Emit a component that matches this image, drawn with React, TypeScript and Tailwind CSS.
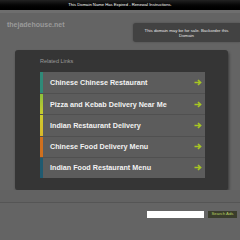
import React from "react";

const links = [
  { t: "Chinese Chinese Restaurant", c: "bg-[#2f8a78]" },
  { t: "Pizza and Kebab Delivery Near Me", c: "bg-gradient-to-b from-[#8cc03a] to-[#c8cc2e]" },
  { t: "Indian Restaurant Delivery", c: "bg-gradient-to-b from-[#cccc2e] to-[#d8b82a]" },
  { t: "Chinese Food Delivery Menu", c: "bg-[#d0701e]" },
  { t: "Indian Food Restaurant Menu", c: "bg-[#1f5a70]" },
];

function Arrow() {
  return (
    <svg width="8" height="7" viewBox="0 0 8 7" className="shrink-0">
      <path d="M0.5 3.5H6M4 1L6.6 3.5L4 6" stroke="#a6c623" strokeWidth="1.6" fill="none" />
    </svg>
  );
}

export default function App() {
  return (
    <div className="w-[240px] h-[240px] overflow-hidden bg-[#646464] flex flex-col" style={{ fontFamily: '"Liberation Sans", Arial, sans-serif' }}>
      <div className="h-[10px] shrink-0 bg-gradient-to-b from-[#222] to-[#000] flex items-center justify-center text-[4.2px] text-white leading-none">
        This Domain Name Has Expired - Renewal Instructions.
      </div>
      <div className="h-[3px] shrink-0 bg-[#6e6e6e]" />
      <div className="h-[37px] shrink-0 flex justify-between items-start">
        <div className="pl-[7px] pt-[8px] text-[7px] font-bold text-[#9a9a9a] leading-none">thejadehouse.net</div>
        <div className="mt-[10px] w-[107px] h-[19px] rounded-l-[3px] bg-[#424242] flex flex-col items-center justify-center text-[4.3px] leading-[5px] text-[#e8e8e8] text-center shadow-[0_0_2px_rgba(0,0,0,0.3)]">
          <span>This domain may be for sale. Backorder this</span>
          <span>Domain</span>
        </div>
      </div>
      <div className="ml-[15px] w-[213px] h-[140px] shrink-0 rounded-[3px] bg-[#353535] shadow-[1px_2px_3px_rgba(0,0,0,0.45)] pl-[25px] pt-[9px]">
        <div className="text-[5.5px] text-[#9a9a9a] leading-none h-[13px]">Related Links</div>
        <div className="w-[165px] flex flex-col">
          {links.map((l, i) => (
            <div key={i} className={`h-[21.2px] flex items-stretch bg-[#5c5c5c] ${i > 0 ? "border-t border-[#505050]" : ""}`}>
              <div className={`w-[3px] ${l.c}`} />
              <div className="flex-1 flex items-center justify-between pl-[7px] pr-[3px]">
                <span className="text-[7.2px] font-bold text-[#f2f2f2] leading-none">{l.t}</span>
                <Arrow />
              </div>
            </div>
          ))}
        </div>
      </div>
      <div className="h-[12px] shrink-0 bg-[#626262]" />
      <div className="h-[1px] shrink-0 bg-[#555]" />
      <div className="flex justify-end items-center pt-[8px] pr-[3px] gap-[4px]">
        <div className="w-[57px] h-[7px] bg-white" />
        <div className="w-[29px] h-[7px] bg-[#3a3d2c] text-[4.3px] text-[#b8d060] flex items-center justify-center leading-none">Search Ads</div>
      </div>
    </div>
  );
}
